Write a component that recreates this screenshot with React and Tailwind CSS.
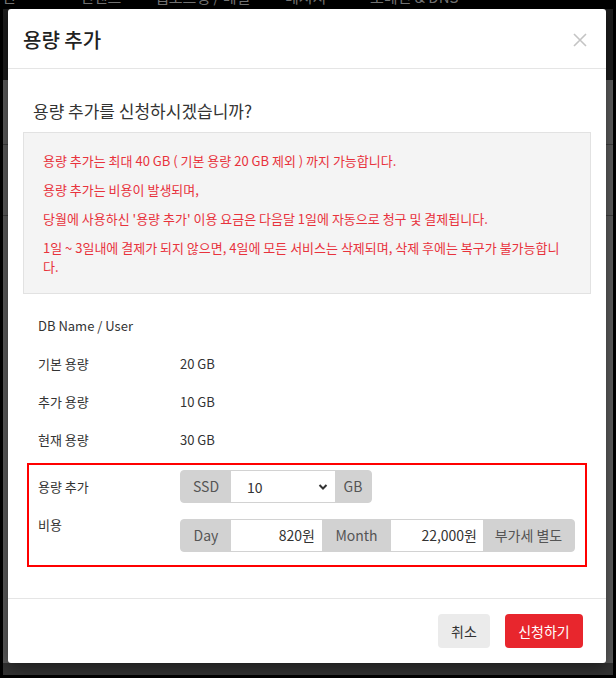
import React from "react";

export default function App() {
  const font = { fontFamily: '"Noto Sans CJK KR", "Noto Sans", sans-serif' };
  return (
    <div className="relative w-[616px] h-[678px] overflow-hidden bg-black" style={font}>
      {/* background page */}
      <div className="flex flex-col h-full">
        <div className="h-[9px] overflow-hidden flex text-[15px] leading-[20px] text-[#777]">
          <div className="flex -mt-[13px]">
            <span className="ml-[2px] w-[78px]">핀</span>
            <span className="w-[75px]">컨텐츠</span>
            <span className="w-[130px]">웹호스팅 / 메일</span>
            <span className="w-[85px]">메시지</span>
            <span>도메인 &amp; DNS</span>
          </div>
        </div>
        <div className="mx-[3px] flex-1 flex flex-col bg-[#5e5e5e]">
          <div className="h-[71px] bg-[#1e1e1e]" />
          <div className="h-[65px] border-b border-[#404040]" />
          <div className="h-[71px] border-b border-[#404040]" />
          <div className="flex-1" />
          <div className="h-[12px] bg-[#333]" />
        </div>
        <div className="h-[3px] bg-black" />
      </div>

      {/* modal */}
      <div className="absolute left-[8px] top-[9px] w-[598px] h-[654px] bg-white rounded-[3px] shadow-[0_4px_16px_rgba(0,0,0,0.5)] flex flex-col">
        <div className="h-[60px] px-[15px] flex items-center justify-between border-b border-[#e5e5e5] shrink-0">
          <h4 className="text-[20px] font-medium text-[#222] leading-[26px] pt-[3px]">용량 추가</h4>
          <svg width="16" height="16" viewBox="0 0 16 16" className="mr-[3px] mt-[2px]">
            <path d="M2 2 L14 14 M14 2 L2 14" stroke="#c4c4c4" strokeWidth="1.6" />
          </svg>
        </div>

        <div className="flex-1 px-[15px] pt-[30px]">
          <p className="pl-[10px] text-[17px] leading-[24px] text-[#333]">용량 추가를 신청하시겠습니까?</p>
          <div className="mt-[9px] bg-[#f4f4f4] border border-[#e2e2e2] pt-[18px] pb-[17px] pl-[19px] pr-[10px] text-[13px] leading-[19px] text-[#e8323c]">
            <p className="mb-[10px]">용량 추가는 최대 40 GB ( 기본 용량 20 GB 제외 ) 까지 가능합니다.</p>
            <p className="mb-[10px]">용량 추가는 비용이 발생되며,</p>
            <p className="mb-[10px]">당월에 사용하신 '용량 추가' 이용 요금은 다음달 1일에 자동으로 청구 및 결제됩니다.</p>
            <p>
              <span className="whitespace-nowrap">1일 ~ 3일내에 결제가 되지 않으면, 4일에 모든 서비스는 삭제되며, 삭제 후에는 복구가 불가능합니</span>
              <br />
              다.
            </p>
          </div>

          <div className="mt-[13px] text-[13px] text-[#333]">
            <div className="h-[38px] flex items-center pl-[15px]">DB Name / User</div>
            <div className="h-[38px] flex items-center pl-[15px]">
              <span className="w-[142px]">기본 용량</span>
              <span>20 GB</span>
            </div>
            <div className="h-[38px] flex items-center pl-[15px]">
              <span className="w-[142px]">추가 용량</span>
              <span>10 GB</span>
            </div>
            <div className="h-[38px] flex items-center pl-[15px]">
              <span className="w-[142px]">현재 용량</span>
              <span>30 GB</span>
            </div>
          </div>

          <div className="mt-[4px] mx-[4px] border-2 border-[#ff0000] pt-[5px] pb-[13px] pl-[9px] text-[13px] text-[#333]">
            <div className="flex items-start">
              <span className="w-[142px] leading-[20px] pt-[7px]">용량 추가</span>
              <div className="flex h-[33px] rounded-[4px] overflow-hidden border border-[#d2d2d2] text-[14px] text-[#555] bg-[#d2d2d2]">
                <span className="w-[50px] flex items-center justify-center">SSD</span>
                <div className="w-[104px] bg-white flex items-center justify-between pl-[16px] pr-[7px] text-[#333]">
                  <span className="pt-[2px]">10</span>
                  <svg width="10" height="8" viewBox="0 0 10 8">
                    <path d="M1.5 2 L5 5.5 L8.5 2" stroke="#333" strokeWidth="2" fill="none" />
                  </svg>
                </div>
                <span className="w-[36px] flex items-center justify-center">GB</span>
              </div>
            </div>
            <div className="flex items-start mt-[16px]">
              <span className="w-[142px] leading-[20px] -mt-[4px]">비용</span>
              <div className="flex h-[33px] rounded-[4px] overflow-hidden border border-[#d2d2d2] text-[14px] text-[#555] bg-[#d2d2d2]">
                <span className="w-[50px] flex items-center justify-center">Day</span>
                <div className="w-[91px] bg-white flex items-center justify-end pr-[7px] text-[#333]">820원</div>
                <span className="w-[69px] flex items-center justify-center">Month</span>
                <div className="w-[92px] bg-white flex items-center justify-end pr-[6px] text-[#333]">22,000원</div>
                <span className="w-[91px] flex items-center justify-center">부가세 별도</span>
              </div>
            </div>
          </div>
        </div>

        <div className="h-[65px] border-t border-[#e5e5e5] flex items-start justify-end gap-[15px] pt-[15px] pr-[23px] shrink-0">
          <button className="h-[34px] w-[52px] rounded-[4px] bg-[#ebebeb] text-[14px] text-[#333]">취소</button>
          <button className="h-[34px] w-[78px] rounded-[4px] bg-[#e8262d] text-[14px] text-white">신청하기</button>
        </div>
      </div>
    </div>
  );
}
